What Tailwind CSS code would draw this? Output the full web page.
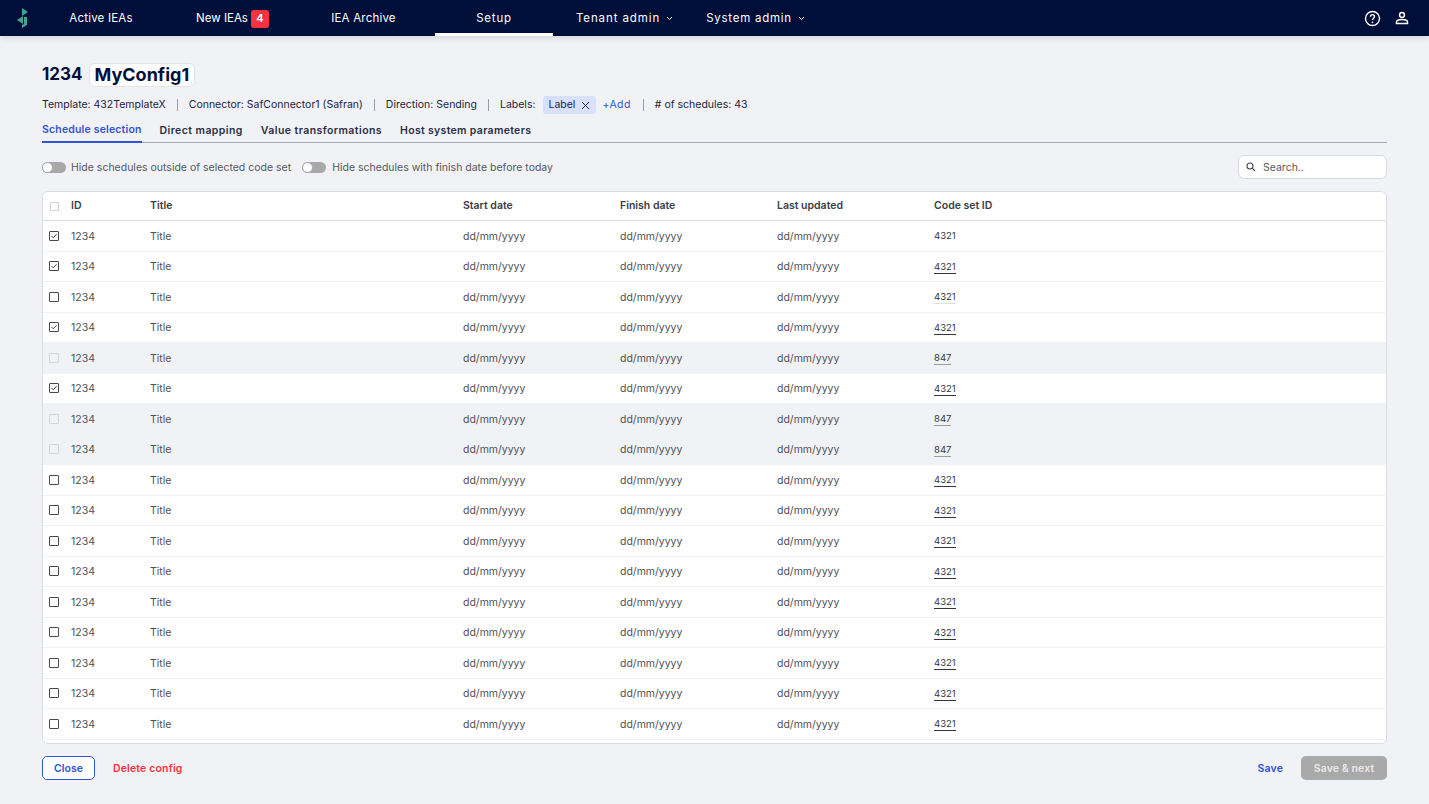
<!DOCTYPE html>
<html lang="en">
<head>
    <meta charset="UTF-8">
    <title>Setup - MyConfig1</title>
    <script src="https://cdn.jsdelivr.net/npm/@tailwindcss/browser@4"></script>
</head>
<body class="bg-[#f1f2f6] h-[804px] w-[1429px] overflow-hidden font-['Inter',sans-serif] text-[#00103c]">
    <!-- Top nav -->
    <header class="h-9 bg-[#000e3a] flex items-center text-white text-[11.5px] shadow-[0_2px_6px_rgba(0,0,0,0.12)] relative">
        <div class="w-[46px] pl-[16px] flex items-center">
            <svg width="14" height="22" viewBox="0 0 14 22">
                <path d="M6 1 L12 5 L6 9 Z" fill="#3fa58c"/>
                <path d="M1 13 L7 9 L7 17 Z" fill="#3fa58c"/>
                <path d="M8 10 H11 V18 L6 21 V18 L8 17 Z" fill="#3fa58c"/>
            </svg>
        </div>
        <nav class="flex items-center h-full">
            <a class="w-[110px] h-full flex items-center justify-center pt-[2px] tracking-[0.2px]">Active IEAs</a>
            <a class="w-[153px] h-full flex items-center justify-center gap-[3px] pt-[1px]"><span class="pt-[1px]">New IEAs</span> <span class="bg-[#f5333f] rounded-[3px] w-[18px] h-[18px] flex items-center justify-center font-semibold text-[11px]">4</span></a>
            <a class="w-[109px] h-full flex items-center justify-center pt-[2px] tracking-[0.2px]">IEA Archive</a>
            <a class="ml-[17px] w-[118px] h-full flex items-center justify-center border-b-[3px] border-white pt-[5px] tracking-[0.8px]">Setup</a>
            <a class="w-[143px] h-full flex items-center justify-center gap-[6px]"><span class="pt-[2px] tracking-[0.9px]">Tenant admin</span>
                <svg width="7" height="5" viewBox="0 0 7 5" fill="none" stroke="white"><path d="M1 1 L3.5 3.5 L6 1"/></svg>
            </a>
            <a class="w-[119px] h-full flex items-center justify-center gap-[6px]"><span class="pt-[2px] tracking-[0.75px]">System admin</span>
                <svg width="7" height="5" viewBox="0 0 7 5" fill="none" stroke="white"><path d="M1 1 L3.5 3.5 L6 1"/></svg>
            </a>
        </nav>
        <div class="ml-auto flex items-center gap-[14px] pr-[20px]">
            <svg width="17" height="17" viewBox="0 0 17 17" fill="none" stroke="white" stroke-width="1.4">
                <circle cx="8.5" cy="8.5" r="7"/>
                <path d="M6.5 6.8 C6.5 4 10.5 4 10.5 6.6 C10.5 8.2 8.5 8.2 8.5 10"/>
                <path d="M8.5 11.5 V13"/>
            </svg>
            <svg width="14" height="14" viewBox="0 0 14 14" fill="none" stroke="white" stroke-width="1.5">
                <circle cx="7" cy="4" r="2.4"/>
                <path d="M1.5 12.5 V11 C1.5 9 4.5 8.4 7 8.4 C9.5 8.4 12.5 9 12.5 11 V12.5 Z"/>
            </svg>
        </div>
    </header>

    <main class="px-[42px]">
        <!-- Title -->
        <div class="flex items-center gap-[6px] mt-[27px] h-6">
            <h1 class="text-[17px] font-bold">1234</h1>
            <span class="text-[18px] font-bold bg-white border border-[#e2e3e8] rounded-[6px] px-[5px] h-6 leading-[22px]">MyConfig1</span>
        </div>

        <!-- Meta row -->
        <div class="flex items-center h-[18px] mt-[9px] text-[10.5px] text-[#1c2440]">
            <span>Template: 432TemplateX</span>
            <span class="w-px h-3 bg-[#9a9ca6] mx-[11px]"></span>
            <span>Connector: SafConnector1 (Safran)</span>
            <span class="w-px h-3 bg-[#9a9ca6] mx-[11px]"></span>
            <span>Direction: Sending</span>
            <span class="w-px h-3 bg-[#9a9ca6] mx-[11px]"></span>
            <span>Labels:</span>
            <span class="ml-[8px] bg-[#d9e0fb] rounded-[3px] h-[18px] w-[53px] pl-[5px] flex items-center gap-[6px]">Label
                <svg width="9" height="9" viewBox="0 0 9 9" stroke="#1c2440" stroke-width="1"><path d="M1 1 L8 8 M8 1 L1 8"/></svg>
            </span>
            <span class="ml-[6px] text-[#2f55d4] tracking-[0.4px]">+Add</span>
            <span class="w-px h-3 bg-[#9a9ca6] ml-[12px] mr-[11px]"></span>
            <span># of schedules: 43</span>
        </div>

        <!-- Tabs -->
        <div class="flex items-center gap-[18px] h-[23px] mt-[6px] border-b border-[#a9abb2] text-[10.5px] font-semibold text-[#2a2f45]">
            <a class="h-[23px] flex items-center border-b-2 border-[#2f55d4] text-[#2f55d4] tracking-[0.17px]">Schedule selection</a>
            <a class="tracking-[0.43px]">Direct mapping</a>
            <a class="tracking-[0.43px]">Value transformations</a>
            <a class="tracking-[0.32px]">Host system parameters</a>
        </div>

        <!-- Filters -->
        <div class="flex items-center justify-between h-[24px] mt-[12px] text-[10.5px] text-[#55585f]">
            <div class="flex items-center">
                <span class="w-6 h-[11px] rounded-full bg-[#a8a8a8] relative"><span class="absolute left-0 top-0 w-[11px] h-[11px] rounded-full bg-white border border-[#a8a8a8]"></span></span>
                <span class="ml-[5px] pt-[2px]">Hide schedules outside of selected code set</span>
                <span class="ml-[11px] w-6 h-[11px] rounded-full bg-[#a8a8a8] relative"><span class="absolute left-0 top-0 w-[11px] h-[11px] rounded-full bg-white border border-[#a8a8a8]"></span></span>
                <span class="ml-[6px] pt-[2px]">Hide schedules with finish date before today</span>
            </div>
            <div class="w-[149px] h-6 bg-white border border-[#d9dadf] rounded-[6px] flex items-center pl-[7px] gap-[7px]">
                <svg width="10" height="10" viewBox="0 0 10 10" fill="none" stroke="#44474f" stroke-width="1.1"><circle cx="4" cy="4" r="3"/><path d="M6.2 6.2 L9 9"/></svg>
                <span class="pt-[1px]">Search..</span>
            </div>
        </div>

        <!-- Table -->
        <div class="mt-[12px] h-[553px] bg-white border border-[#dcdde1] rounded-[6px] overflow-hidden text-[10.5px] text-[#505154]">
            <div class="grid grid-cols-[28px_79px_313px_157px_157px_157px_1fr] items-center h-[29px] border-b border-[#dcdde1] font-semibold text-[#3a3d4a]">
                <span class="pl-[7px]"><span class="block w-[9px] h-[9px] border border-[#d4d5d9]"></span></span>
                <span>ID</span><span>Title</span><span>Start date</span><span>Finish date</span><span>Last updated</span><span>Code set ID</span>
            </div>
            <div id="rows"></div>
        </div>

        <!-- Footer actions -->
        <div class="flex items-center mt-[12px] h-6 text-[10.5px] font-semibold">
            <button class="w-[53px] h-6 bg-white border border-[#2f55d4] rounded-[5px] text-[#2f55d4] font-semibold pt-[1px]">Close</button>
            <button class="ml-[18px] text-[#f5333f] font-semibold tracking-[0.15px] pt-[1px]">Delete config</button>
            <button class="ml-auto text-[#2f55d4] font-semibold tracking-[0.15px] pt-[1px]">Save</button>
            <button class="ml-[18px] w-[86px] h-6 bg-[#a9a9a9] rounded-[5px] text-[#e8e8e8] font-semibold tracking-[0.1px] pt-[1px]">Save &amp; next</button>
        </div>
    </main>

    <script>
        // kind: c = checked, u = unchecked, d = disabled (grey row)
        const rows = [
            ['c', '4321', ''], ['c', '4321', 'dark'], ['u', '4321', 'faint'], ['c', '4321', 'dark'],
            ['d', '847', 'grey'], ['c', '4321', 'dark'], ['d', '847', 'grey'], ['d', '847', 'grey'],
            ['u', '4321', 'dark'], ['u', '4321', 'dark'], ['u', '4321', 'dark'], ['u', '4321', 'dark'],
            ['u', '4321', 'dark'], ['u', '4321', 'dark'], ['u', '4321', 'dark'], ['u', '4321', 'dark'],
            ['u', '4321', 'dark']
        ];
        const underline = {
            '': 'border-transparent',
            dark: 'border-[#33363d]',
            faint: 'border-[#dcdde1]',
            grey: 'border-[#9a9ca6]'
        };
        const box = {
            c: `<svg class="block" width="10" height="10" viewBox="0 0 10 10" fill="none" stroke="#44474f"><rect x="0.5" y="0.5" width="9" height="9" rx="0.5"/><path d="M2.5 5 L4.3 6.8 L7.6 3.2"/></svg>`,
            u: `<svg class="block" width="10" height="10" viewBox="0 0 10 10" fill="none" stroke="#44474f"><rect x="0.5" y="0.5" width="9" height="9" rx="0.5"/></svg>`,
            d: `<svg class="block" width="10" height="10" viewBox="0 0 10 10" fill="none" stroke="#d4d5d9"><rect x="0.5" y="0.5" width="9" height="9" rx="0.5"/></svg>`
        };
        document.getElementById('rows').innerHTML = rows.map(([kind, code, line]) => `
            <div class="grid grid-cols-[28px_79px_313px_157px_157px_157px_1fr] items-center h-[30.5px] border-b border-[#f1f2f4] ${kind === 'd' ? 'bg-[#f1f2f6]' : 'bg-white'}">
                <span class="pl-[6px]">${box[kind]}</span>
                <span class="pt-[2px]">1234</span><span class="pt-[2px]">Title</span><span class="pt-[2px]">dd/mm/yyyy</span><span class="pt-[2px]">dd/mm/yyyy</span><span class="pt-[2px]">dd/mm/yyyy</span>
                <span class="pt-[1px]"><span class="inline-block text-[9.5px] leading-[12px] text-[#33363d] border-b ${underline[line]}">${code}</span></span>
            </div>`).join('');
    </script>
</body>
</html>
